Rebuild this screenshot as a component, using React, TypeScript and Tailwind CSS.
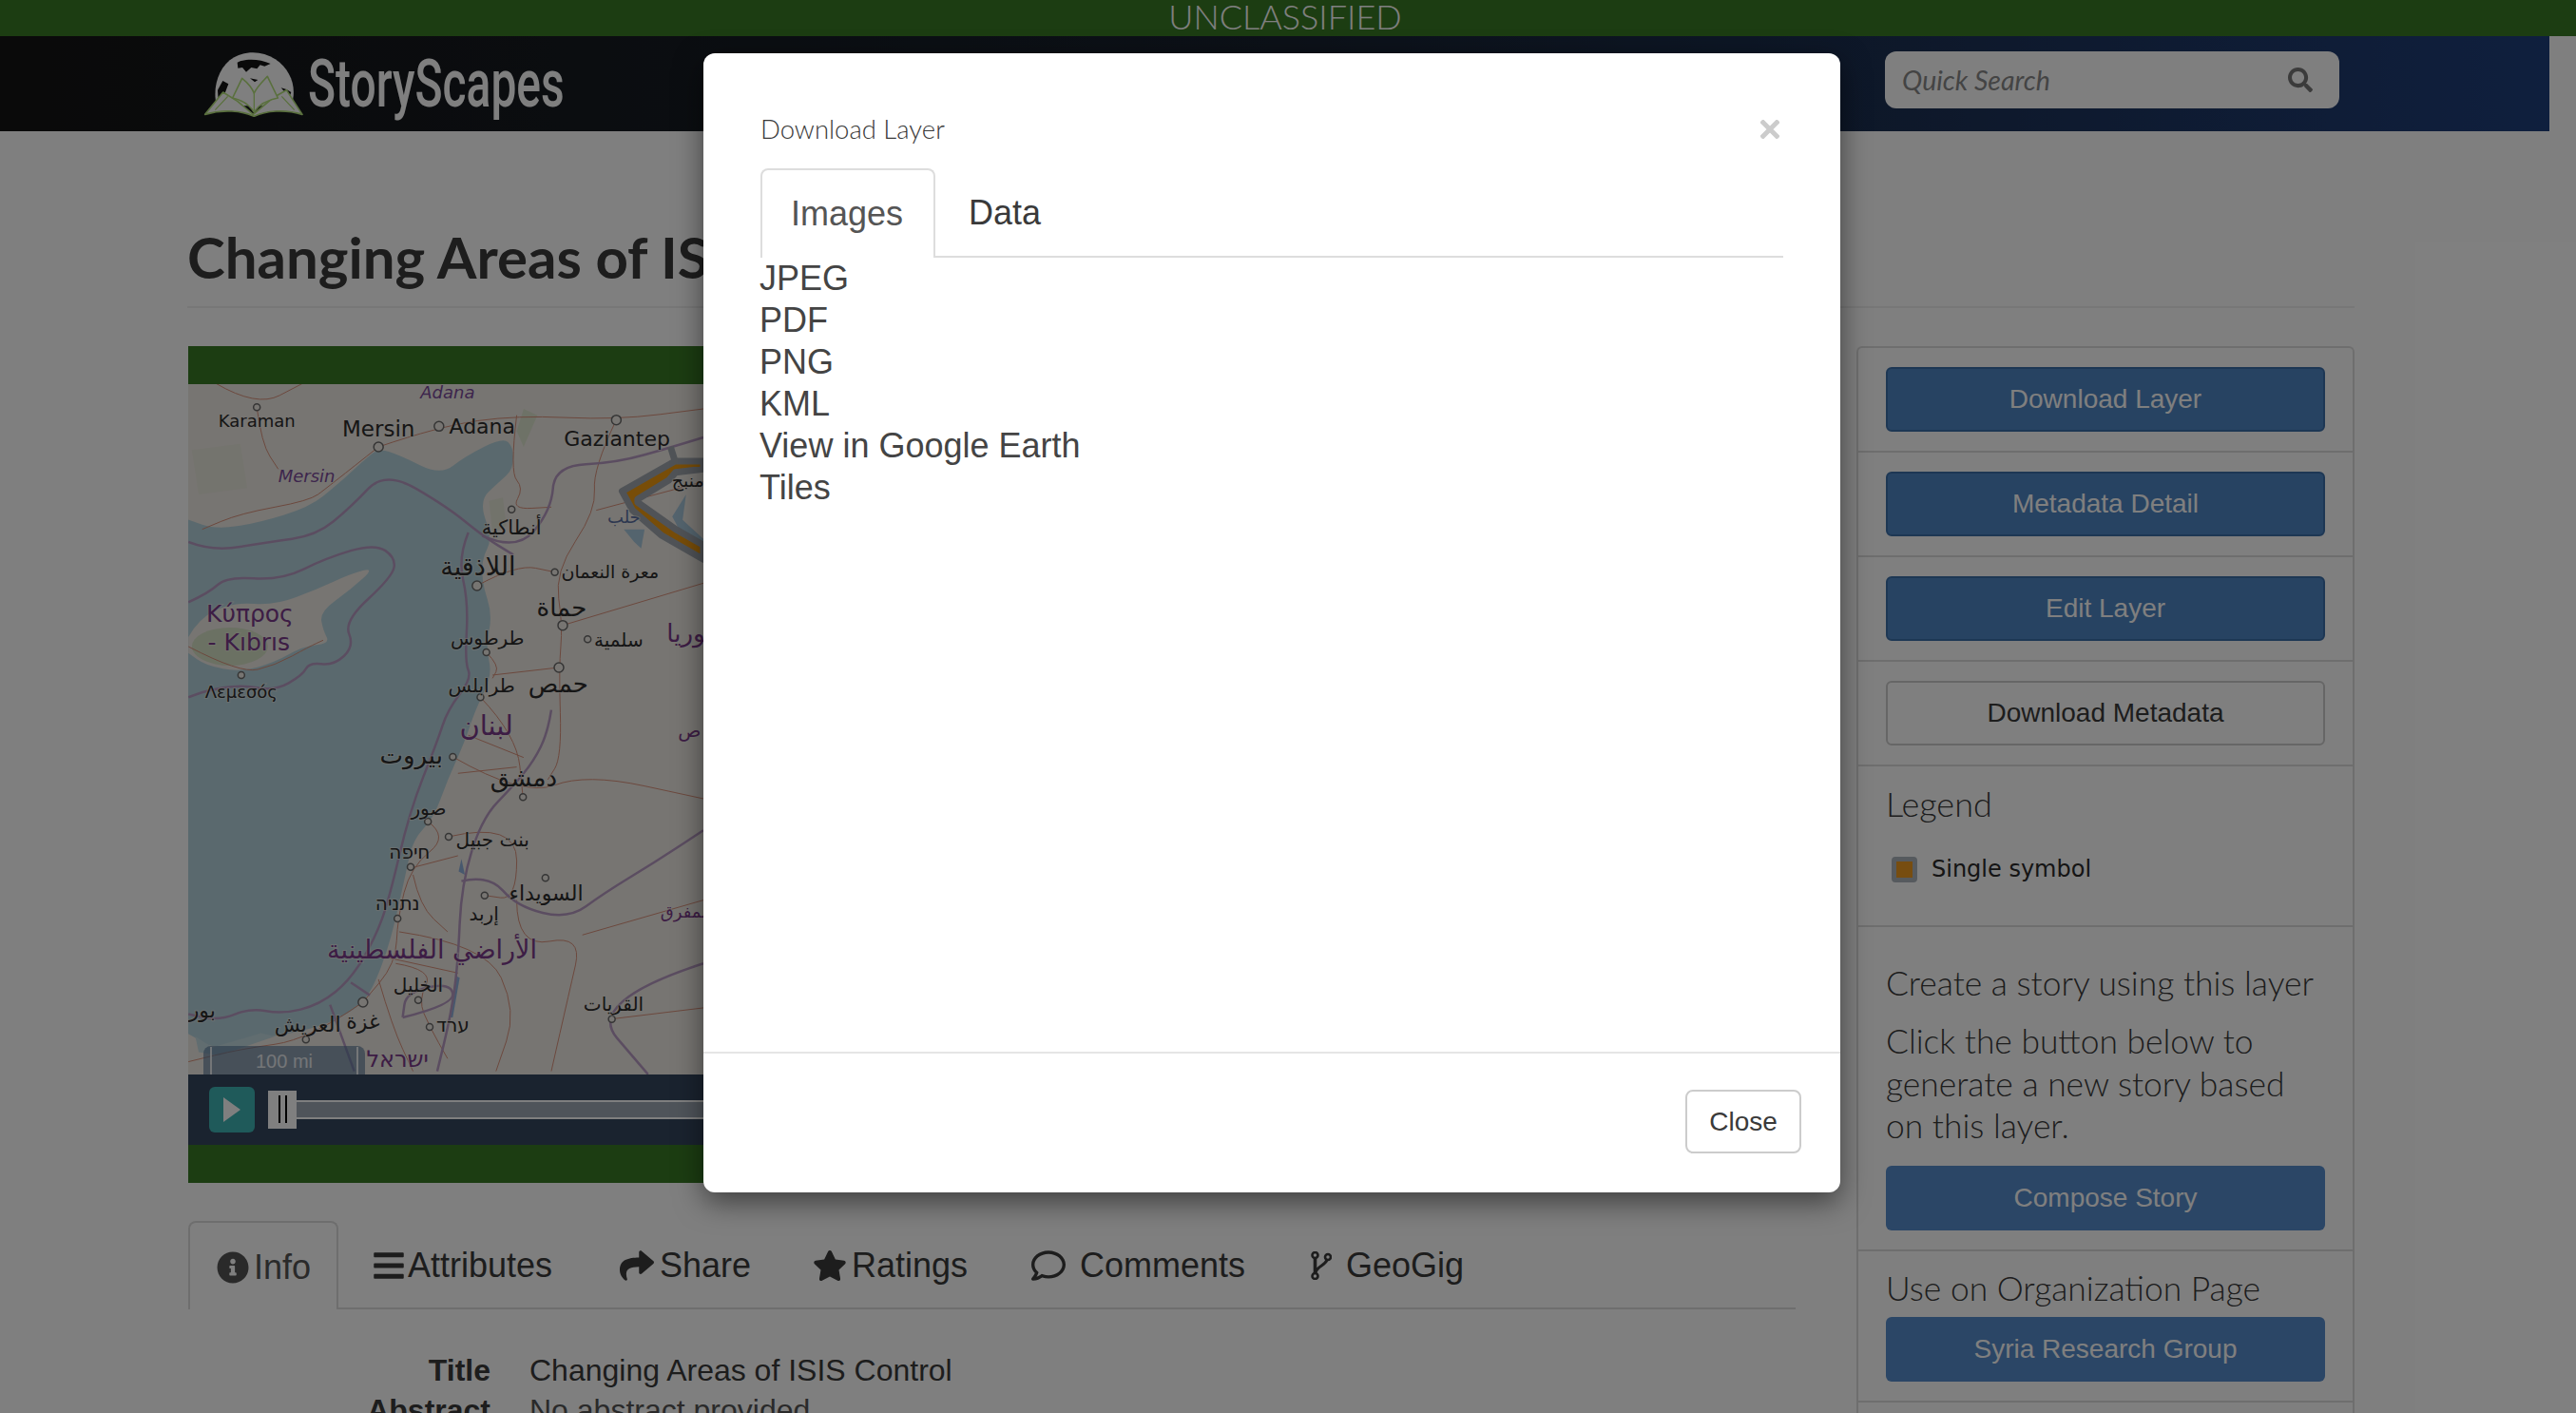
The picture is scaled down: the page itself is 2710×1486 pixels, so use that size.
import { FaInfoCircle, FaBars, FaShare, FaStar, FaRegComment, FaSearch } from "react-icons/fa";

type Pt = [number, number];

// points are in map-picture units, the group transform below maps them to pixels
const smooth = (pts: Pt[]) => {
  let d = `M${pts[0][0]} ${pts[0][1]}`;
  for (let i = 1; i < pts.length - 1; i++) {
    const mx = (pts[i][0] + pts[i + 1][0]) / 2;
    const my = (pts[i][1] + pts[i + 1][1]) / 2;
    d += ` Q${pts[i][0]} ${pts[i][1]} ${mx} ${my}`;
  }
  const last = pts[pts.length - 1];
  return d + ` L${last[0]} ${last[1]}`;
};

const seaPts: Pt[] = [
  [0, 480], [50, 500], [130, 530], [250, 510], [400, 460], [480, 390], [560, 310], [600, 275], [660, 295], [780, 360], [850, 300], [960, 240],
  [990, 270], [990, 340], [950, 380], [890, 440], [930, 560], [900, 620], [900, 700], [930, 800], [910, 900], [930, 990], [880, 1100],
  [850, 1200], [800, 1320], [760, 1440], [700, 1510], [680, 1610], [650, 1760], [620, 1880], [570, 2010], [510, 2060], [430, 2100], [300, 2130],
  [200, 2140], [120, 2170], [50, 2120], [0, 2100],
];
const cyprusPts: Pt[] = [
  [50, 870], [80, 810], [180, 760], [300, 770], [420, 720], [520, 670], [590, 650], [520, 720], [430, 790], [440, 850], [460, 890], [380, 900],
  [300, 950], [200, 980], [100, 960], [50, 920],
];

const purple: Pt[][] = [
  [[50, 570], [120, 600], [280, 570], [420, 550], [520, 460], [620, 345], [800, 460], [900, 550], [990, 610]],
  [[50, 760], [110, 730], [160, 680], [320, 690], [450, 620], [590, 575], [650, 620], [640, 680], [500, 820], [530, 900], [470, 960], [400, 950], [380, 990], [300, 1040], [200, 1020], [100, 1040], [50, 1060]],
  [[860, 540], [830, 620], [860, 760], [850, 950], [870, 1000], [800, 1100], [770, 1200], [690, 1420], [630, 1700], [590, 1820], [520, 1950], [430, 2030], [320, 2060], [230, 2040], [140, 2080], [50, 2060]],
  [[900, 550], [1000, 600], [1100, 470], [1110, 330], [1290, 320], [1450, 270], [1540, 240]],
  [[1100, 1100], [1090, 1170], [1050, 1260], [990, 1340], [900, 1440], [840, 1650], [830, 1900], [810, 2060], [770, 2240]],
  [[840, 1640], [920, 1620], [1000, 1720], [1150, 1760], [1250, 1680], [1400, 1580], [1540, 1480]],
  [[1540, 1900], [1200, 2020], [1380, 2250]],
  [[670, 2070], [820, 2030], [810, 1960], [680, 1990], [670, 2070]],
  [[460, 2030], [530, 2240]],
  [[520, 1960], [575, 2000]],
];

const roads: Pt[][] = [
  [[130, 70], [248, 145], [380, 70]], [[248, 145], [262, 260], [310, 340]], [[600, 270], [450, 400], [400, 440], [200, 480], [90, 530]],
  [[600, 270], [775, 205], [1000, 170], [1288, 185], [1540, 150]], [[1000, 170], [980, 350], [1020, 400], [985, 467], [1100, 460]],
  [[1288, 185], [1220, 340], [1230, 470], [1110, 665], [1133, 833], [1122, 966], [1130, 1250], [1090, 1320]],
  [[1230, 470], [1540, 380]], [[1133, 833], [1540, 700]], [[885, 708], [1000, 640], [1110, 665]], [[1122, 966], [930, 990]],
  [[912, 918], [950, 960], [930, 1000]], [[895, 1060], [1000, 1180], [1018, 1375]], [[815, 1248], [1018, 1375], [1200, 1300], [1540, 1380]],
  [[860, 1180], [1020, 1250]], [[830, 1300], [1000, 1280]],
  [[743, 1452], [803, 1500], [693, 1595], [655, 1758], [650, 1900], [555, 2022]], [[803, 1500], [1000, 1450], [1000, 1700], [907, 1685]],
  [[1000, 1700], [1000, 1850], [1190, 1810], [1150, 2000], [1100, 2240]], [[690, 1600], [830, 1560]], [[660, 1800], [910, 1840], [1000, 2050], [940, 2240]],
  [[650, 1900], [760, 1920], [715, 2015], [748, 2100], [800, 2200]], [[620, 1880], [830, 1930]], [[700, 1620], [720, 1720], [800, 1800]],
  [[555, 2022], [400, 2140], [200, 2170], [50, 2210]], [[600, 1950], [640, 2100], [700, 2240]], [[1190, 1810], [1540, 1700]],
  [[1275, 2075], [1540, 2040]], [[50, 900], [200, 985], [300, 960], [400, 900], [440, 880]],
];

const dots: [number, number, boolean?][] = [
  [248, 145], [600, 270, true], [775, 205, true], [1288, 185, true], [985, 467], [885, 708, true], [1110, 665], [1133, 833, true], [1205, 877],
  [912, 918], [1122, 966, true], [895, 1060], [203, 990], [815, 1248], [1018, 1375], [803, 1500], [743, 1452], [693, 1595], [655, 1758],
  [1083, 1630], [907, 1685], [715, 2015], [555, 2022, true], [390, 2140], [748, 2100], [1275, 2075],
];

const labels: [string, number, number, number, string?, boolean?][] = [
  ["Adana", 800, 118, 18, "#7a4a9a", true],
  ["Karaman", 248, 206, 18],
  ["Mersin", 600, 236, 23],
  ["Adana", 900, 228, 22],
  ["Gaziantep", 1290, 266, 22],
  ["Mersin", 392, 382, 18, "#7a4a9a", true],
  ["Κύπρος", 228, 822, 25, "#7a3a8a"],
  ["- Kıbrıs", 225, 912, 25, "#7a3a8a"],
  ["Λεμεσός", 203, 1062, 18],
  ["أنطاكية", 985, 545, 21],
  ["اللاذقية", 888, 675, 27],
  ["معرة النعمان", 1270, 685, 19],
  ["حماة", 1130, 805, 26],
  ["طرطوس", 915, 895, 20],
  ["سلمية", 1295, 900, 20],
  ["طرابلس", 898, 1045, 20],
  ["حمص", 1120, 1045, 26],
  ["لبنان", 912, 1180, 29, "#7a3a8a"],
  ["بيروت", 695, 1270, 26],
  ["دمشق", 1020, 1340, 26],
  ["صور", 745, 1430, 20],
  ["منبج", 1495, 395, 19],
  ["حلب", 1310, 510, 18, "#5a6fa0"],
  ["سوريا", 1520, 885, 26, "#7a3a8a"],
  ["ص", 1500, 1185, 20, "#7a3a8a"],
  ["بنت جبيل", 930, 1530, 20],
  ["חיפה", 690, 1570, 20],
  ["נתניה", 655, 1730, 20],
  ["السويداء", 1085, 1700, 22],
  ["إربد", 905, 1765, 20],
  ["الأراضي الفلسطينية", 755, 1885, 27, "#7a3a8a"],
  ["الخليل", 715, 1990, 20],
  ["غزة", 555, 2105, 22],
  ["العريش", 395, 2115, 22],
  ["ערד", 815, 2115, 20],
  ["ישראל", 655, 2225, 24, "#7a3a8a"],
  ["القريات", 1280, 2050, 20],
  ["بور", 90, 2070, 22],
  ["المفرق", 1490, 1755, 18, "#7a3a8a"],
];

const px = (x: number) => 180 + x / 2.75;
const py = (y: number) => 380 + y / 3;

function MapArt() {
  return (
    <svg className="block" width="1691" height="726" viewBox="198 404 1691 726">
      <rect x="198" y="404" width="1691" height="726" fill="#efeae4" />
      <g transform="translate(180 380) scale(0.3636 0.3333)" fill="none">
        <path d="M1020 150 L1060 170 L1020 270 L1000 220Z" fill="#dde5cf" />
        <path d="M60 280 L200 260 L220 400 L80 420Z" fill="#e8e8dc" />
        <path d="M920 440 L960 430 L970 520 L930 540Z" fill="#e4e7d6" />
        <path d={smooth(seaPts) + " Z"} fill="#b5d3dc" />
        <path d={smooth(cyprusPts) + " Z"} fill="#efeae4" />
        <ellipse cx="170" cy="900" rx="110" ry="60" fill="#d6e2c6" />
        <path d="M1450 490 L1490 420 L1480 500 L1540 560 L1540 580 L1470 530Z" fill="#a9c8dc" />
        <path d="M1310 530 L1370 530 L1360 590 L1340 570Z" fill="#a9c8dc" />
        <path d="M840 1570 L850 1620 L832 1610Z" fill="#8fb0dc" />
        <path d="M825 1940 L835 1945 L815 2070 L805 2070Z" fill="#8fb0dc" />
        <path d="M70 2130 L120 2165 L260 2120 L300 2130 L140 2190 L80 2180Z" fill="#c3dae0" />
        {roads.map((r, i) => (
          <path key={i} d={smooth(r)} stroke="#d9927c" strokeWidth="1" vectorEffect="non-scaling-stroke" />
        ))}
        {purple.map((r, i) => (
          <path key={i} d={smooth(r)} stroke="#b79ac2" strokeWidth="2.5" vectorEffect="non-scaling-stroke" />
        ))}
        <path
          d="M1445 270 L1458 315 L1305 410 L1335 470 L1420 550 L1540 625 L1540 580 L1460 530 L1350 445 L1350 435 L1440 375 L1460 350 L1540 340 L1540 315 L1458 315"
          fill="#f09a10"
          stroke="#a0a7ae"
          strokeWidth="7"
          strokeLinejoin="round"
          vectorEffect="non-scaling-stroke"
        />
      </g>
      {dots.map(([x, y, big], i) => (
        <circle key={i} cx={px(x)} cy={py(y)} r={big ? 5 : 3.5} fill="#efeae4" stroke="#6a6a6a" strokeWidth="1.5" />
      ))}
      <g fontFamily="'DejaVu Sans', sans-serif" textAnchor="middle">
        {labels.map(([t, x, y, s, c, it], i) => (
          <text
            key={i}
            x={px(x)}
            y={py(y)}
            fontSize={s}
            fill={c || "#2c2c2c"}
            fontStyle={it ? "italic" : "normal"}
            stroke="#efeae4"
            strokeOpacity="0.55"
            strokeWidth="2"
            paintOrder="stroke"
          >
            {t}
          </text>
        ))}
      </g>
    </svg>
  );
}

function Logo() {
  return (
    <svg width="110" height="70" viewBox="40 90 330 210" className="shrink-0">
      <path d="M85 265 C70 210 90 140 140 112 C180 90 230 92 270 118 C320 152 340 210 320 265 Z" fill="#ffffff" />
      <path d="M150 128 C180 114 222 118 255 132 L236 140 L222 136 L212 148 L194 144 L178 158 L166 144 L152 146 Z" fill="#141414" />
      <path d="M88 215 L104 186 L122 196 L112 222 L96 244 L90 246 Z" fill="#141414" />
      <path d="M190 178 L215 183 L205 190 Z M288 208 L305 213 L320 222 L316 232 L300 222 Z" fill="#141414" />
      <path d="M48 292 L105 222 L150 250 L200 292 L262 240 L305 215 L355 292 C300 275 240 280 203 298 C165 280 105 275 48 292 Z" fill="#ffffff" stroke="#b4e07c" strokeWidth="5" strokeLinejoin="round" />
      <path d="M80 278 L120 235 M330 278 L290 235" stroke="#b4e07c" strokeWidth="4" />
      <path d="M135 240 L165 178 C180 190 195 205 203 225 C212 205 228 190 245 172 L278 240 C250 245 220 258 203 285 C185 258 160 245 135 240 Z" fill="#ffffff" stroke="#b4e07c" strokeWidth="5" strokeLinejoin="round" />
      <path d="M203 225 L203 285" stroke="#b4e07c" strokeWidth="4" />
    </svg>
  );
}

function GeoGigIcon() {
  return (
    <svg width="22" height="30" viewBox="0 0 22 30" fill="none" stroke="currentColor" strokeWidth="2.6">
      <circle cx="4.5" cy="4" r="3" />
      <circle cx="4.5" cy="26" r="3" />
      <circle cx="18" cy="6" r="3" />
      <path d="M4.5 7 V23" strokeWidth="3.6" />
      <path d="M17 9 C15 15 7 15 5 22" strokeWidth="3" />
    </svg>
  );
}

function SideRow({ children, className = "" }: { children: React.ReactNode; className?: string }) {
  return <div className={`border-b-2 border-[#dddddd] px-[29px] ${className}`}>{children}</div>;
}

function BlueBtn({ label }: { label: string }) {
  return (
    <div className="flex h-[68px] items-center justify-center rounded-[6px] border-2 border-[#3b6ea8] bg-[#4f86c4] text-[28px] text-white">
      {label}
    </div>
  );
}

const tabs = [
  { label: "Attributes", icon: <FaBars className="text-[36px]" />, w: "w-[261px]", gap: "gap-[2px]" },
  { label: "Share", icon: <FaShare className="text-[36px]" />, w: "w-[203px]", gap: "gap-[6px]" },
  { label: "Ratings", icon: <FaStar className="text-[36px]" />, w: "w-[230px]", gap: "gap-[5px]" },
  { label: "Comments", icon: <FaRegComment className="text-[36px]" />, w: "w-[294px]", gap: "gap-[15px]" },
  { label: "GeoGig", icon: <GeoGigIcon />, w: "w-[203px]", gap: "gap-[15px]" },
];

const formats = ["JPEG", "PDF", "PNG", "KML", "View in Google Earth", "Tiles"];

export default function App() {
  return (
    <div className="relative h-[1486px] w-[2710px] overflow-hidden bg-white font-['Liberation_Sans',sans-serif] text-[#3a3a3a]">
      <div className="flex h-[38px] items-start justify-center overflow-hidden bg-[#387a24] pr-[6px] font-['Lato',sans-serif] text-[36px] font-light leading-[35px] text-white">
        UNCLASSIFIED
      </div>

      <header className="flex h-[100px] w-[2682px] items-center bg-gradient-to-r from-[#141414] via-[#182230] to-[#1f3f7c] pl-[213px] pr-[221px]">
        <Logo />
        <span className="ml-[1px] inline-block w-[265px] origin-left scale-x-[0.685] font-['Roboto',sans-serif] text-[70px] font-medium leading-[70px] whitespace-nowrap text-white">
          StoryScapes
        </span>
        <div className="mb-[8px] ml-auto flex h-[60px] w-[478px] items-center justify-between rounded-[12px] bg-white pl-[18px] pr-[28px] font-['Lato',sans-serif] text-[28.5px] italic text-[#888888]">
          <span>Quick Search</span>
          <FaSearch className="text-[26px] text-[#777777]" />
        </div>
      </header>

      <main className="w-[2477px] pl-[198px]">
        <h1 className="h-[186px] border-b-2 border-[#eeeeee] pt-[97px] -ml-[1px] font-['Lato',sans-serif] text-[60px] font-bold leading-[70px] whitespace-nowrap">
          Changing Areas of ISIS Control
        </h1>

        <div className="mt-[40px] flex justify-between">
          <div className="w-[1691px]">
            <div className="h-[40px] bg-[#387a24]" />
            <div className="relative h-[726px] overflow-hidden">
              <MapArt />
              <div className="absolute bottom-0 left-[16px] flex h-[30px] w-[170px] justify-center rounded-t-[8px] bg-[#4f6f92]/60 pt-[1px] text-[20px] text-white/80">
                <div className="flex w-[156px] justify-center border-x-2 border-white/80">100 mi</div>
              </div>
            </div>
            <div className="flex h-[74px] items-center bg-[#34465e] pl-[22px]">
              <div className="flex h-[48px] w-[48px] items-center justify-center rounded-[6px] bg-[#3eb4b4]">
                <svg width="20" height="26" viewBox="0 0 20 26">
                  <path d="M1 0 L19 13 L1 26 Z" fill="#ffffff" />
                </svg>
              </div>
              <div className="ml-[14px] flex h-[40px] w-[30px] justify-center gap-[5px] bg-white pt-[5px]">
                <div className="h-[29px] w-[2px] bg-black" />
                <div className="h-[29px] w-[2px] bg-black" />
              </div>
              <div className="h-[20px] flex-1 border-y-2 border-[#ffffff] bg-[#9ea9b4]" />
            </div>
            <div className="h-[40px] bg-[#387a24]" />

            <nav className="mt-[40px] flex h-[93px] border-b-2 border-[#dddddd] text-[36px]">
              <div className="flex h-[93px] w-[158px] items-center gap-[5px] rounded-t-[8px] border-x-2 border-t-2 border-[#dddddd] bg-white pt-[3px] pl-[28px] text-[#555555]">
                <FaInfoCircle className="text-[34px]" />
                <span>Info</span>
              </div>
              {tabs.map((t) => (
                <div key={t.label} className={`flex items-center pt-[3px] pl-[35px] ${t.w} ${t.gap}`}>
                  {t.icon}
                  <span>{t.label}</span>
                </div>
              ))}
            </nav>

            <dl className="mt-[43px] grid grid-cols-[318px_1fr] gap-x-[41px] text-[32px] leading-[42px]">
              <dt className="text-right font-bold">Title</dt>
              <dd>Changing Areas of ISIS Control</dd>
              <dt className="text-right font-bold">Abstract</dt>
              <dd className="text-[#555555]">No abstract provided</dd>
            </dl>
          </div>

          <aside className="h-[1200px] w-[524px] rounded-[6px] border-2 border-b-0 border-[#dddddd]">
            <SideRow className="py-[20px]">
              <BlueBtn label="Download Layer" />
            </SideRow>
            <SideRow className="py-[20px]">
              <BlueBtn label="Metadata Detail" />
            </SideRow>
            <SideRow className="py-[20px]">
              <BlueBtn label="Edit Layer" />
            </SideRow>
            <SideRow className="py-[20px]">
              <div className="flex h-[68px] items-center justify-center rounded-[6px] border-2 border-[#cccccc] bg-white text-[28px]">
                Download Metadata
              </div>
            </SideRow>
            <SideRow className="h-[169px] pt-[17px] font-['Lato',sans-serif] font-light">
              <div className="text-[36px] leading-[44px]">Legend</div>
              <div className="mt-[32px] flex items-center pl-[6px]">
                <div className="h-[27px] w-[27px] rounded-[4px] border-[5px] border-[#adb5bd] bg-[#ee9b20]" />
                <span className="ml-[15px] font-['DejaVu_Sans',sans-serif] text-[24px] font-normal leading-[30px] text-[#2a2a2a]">Single symbol</span>
              </div>
            </SideRow>
            <SideRow className="pt-[37px] pb-[20px] font-['Lato',sans-serif] font-light">
              <div className="text-[35.4px] leading-[44px] whitespace-nowrap">Create a story using this layer</div>
              <p className="mt-[17px] text-[35.4px] leading-[44.5px]">Click the button below to generate a new story based on this layer.</p>
              <div className="mt-[19px] flex h-[68px] items-center justify-center rounded-[6px] bg-[#568ccc] font-['Liberation_Sans',sans-serif] text-[28px] font-normal text-white">
                Compose Story
              </div>
            </SideRow>
            <SideRow className="pt-[17px] pb-[20px] font-['Lato',sans-serif] font-light">
              <div className="text-[35.4px] leading-[44px] whitespace-nowrap">Use on Organization Page</div>
              <div className="mt-[8px] flex h-[68px] items-center justify-center rounded-[6px] bg-[#568ccc] font-['Liberation_Sans',sans-serif] text-[28px] font-normal text-white">
                Syria Research Group
              </div>
            </SideRow>
          </aside>
        </div>
      </main>

      <div className="absolute inset-0 bg-black/50" />

      <div className="absolute top-[56px] left-[740px] flex h-[1198px] w-[1196px] flex-col rounded-[12px] bg-white shadow-[0_10px_30px_rgba(0,0,0,0.5)]">
        <div className="flex-1 pt-[60px] pl-[60px] pr-[60px]">
          <div className="flex items-center justify-between">
            <h4 className="font-['Lato',sans-serif] text-[27.5px] font-light leading-[40px]">Download Layer</h4>
            <svg width="20" height="20" viewBox="0 0 20 20" className="mr-[4px]" stroke="#cccccc" strokeWidth="5">
              <path d="M1 1 L19 19 M19 1 L1 19" />
            </svg>
          </div>
          <div className="mt-[21px] flex h-[94px] border-b-2 border-[#dddddd] text-[36px]">
            <div className="flex h-[94px] w-[184px] items-center justify-center rounded-t-[8px] border-x-2 border-t-2 border-[#dddddd] bg-white pr-[2px] text-[#555555]">
              Images
            </div>
            <div className="flex items-center pt-[2px] pl-[35px]">Data</div>
          </div>
          <ul className="-ml-[1px] text-[36px] leading-[44px] text-[#444444]">
            {formats.map((f) => (
              <li key={f}>{f}</li>
            ))}
          </ul>
        </div>
        <div className="flex h-[148px] items-start justify-end border-t-2 border-[#e5e5e5] pt-[38px] pr-[41px]">
          <div className="flex h-[67px] w-[122px] items-center justify-center rounded-[8px] border-2 border-[#cccccc] text-[28px]">Close</div>
        </div>
      </div>
    </div>
  );
}
